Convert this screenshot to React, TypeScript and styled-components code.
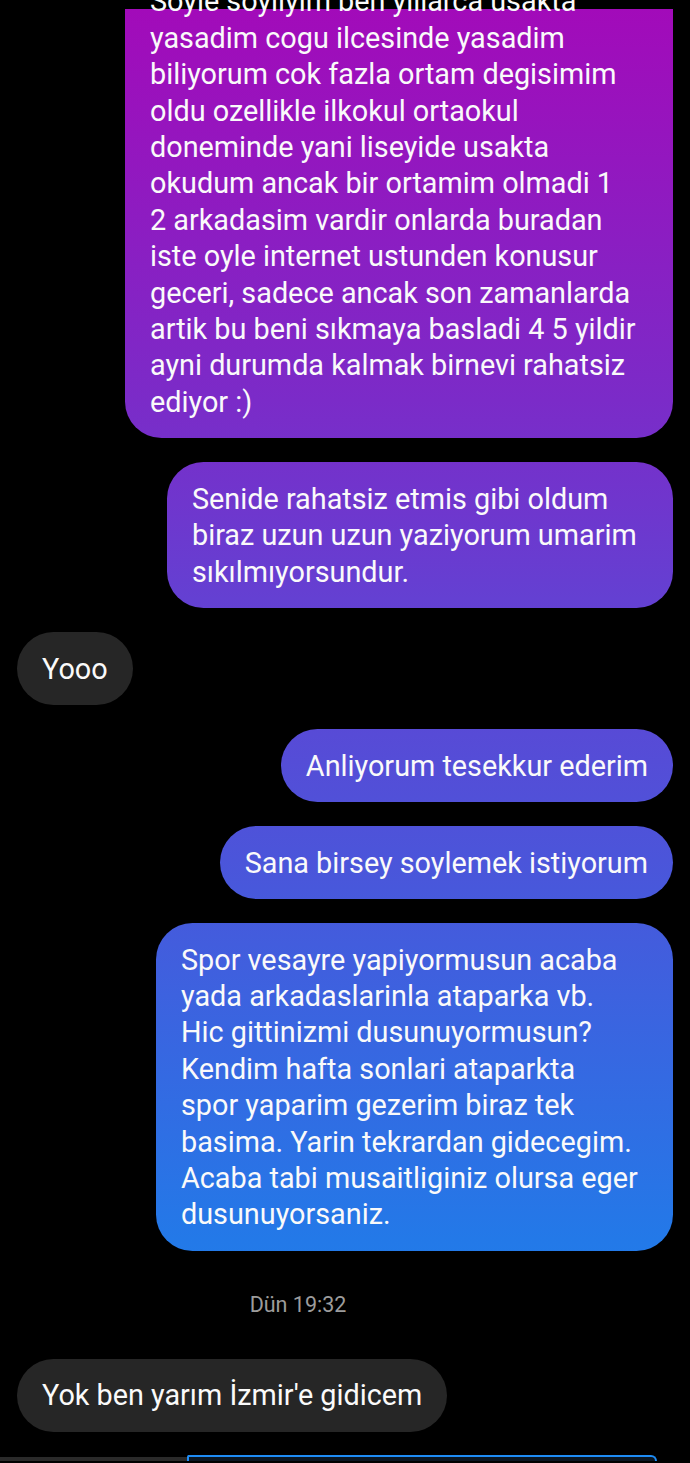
import styled, { createGlobalStyle, css } from 'styled-components';

const GlobalStyle = createGlobalStyle`
  html, body {
    margin: 0;
    padding: 0;
    background: #000;
    overflow: hidden;
  }
  body {
    font-family: Roboto, "Noto Sans", "Liberation Sans", sans-serif;
    -webkit-font-smoothing: antialiased;
  }
`;

// the instagram style gradient runs over the whole screen, bubbles show the part behind them
const sentGradient = `linear-gradient(180deg, #a30ab9 0px, #7b2bc8 400px, #6440d2 600px, #4b55da 860px, #2379e8 1240px, #1b86ee 1463px) fixed`;

const Screen = styled.div`
  width: 690px;
  height: 1463px;
  overflow: hidden;
  background: #000;
`;

const Thread = styled.div`
  display: flex;
  flex-direction: column;
  gap: 24px;
  padding: 0 17px;
  margin-top: -35px;
`;

const Row = styled.div<{ $side: 'in' | 'out' }>`
  display: flex;
  justify-content: ${(p) => (p.$side === 'out' ? 'flex-end' : 'flex-start')};
`;

const Bubble = styled.div<{ $side: 'in' | 'out'; $width?: number; $clipTop?: number }>`
  box-sizing: border-box;
  padding: 18.3px 25px;
  border-radius: 36.5px;
  font-size: 28.8px;
  line-height: 36.4px;
  color: #fafafa;
  white-space: nowrap;
  ${(p) => (p.$width ? `width: ${p.$width}px;` : '')}
  ${(p) =>
    p.$side === 'out'
      ? css`
          background: ${sentGradient};
        `
      : css`
          background: #262626;
        `}
  ${(p) =>
    p.$clipTop
      ? css`
          border-radius: 0 0 36.5px 36.5px;
          background: linear-gradient(#000, #000) 0 0 / 100% ${p.$clipTop}px no-repeat, ${sentGradient};
        `
      : ''}
`;

const Stamp = styled.div`
  margin: 18px 0;
  padding-right: 94px;
  text-align: center;
  font-size: 21.5px;
  line-height: 24px;
  color: #9c9c9c;
`;

const Peek = styled.div`
  display: flex;
  align-items: flex-end;
  margin: -1px -17px 0;
  height: 6px;
`;

const PeekBar = styled.div`
  width: 187px;
  height: 4px;
  background: #2a2a2a;
`;

const PeekBubble = styled.div`
  width: 470px;
  height: 6px;
  box-sizing: border-box;
  border: 2px solid #1e8cf5;
  border-bottom: none;
  border-radius: 10px 34px 0 0;
  background: #0a1622;
`;

const Lines = ({ lines }: { lines: string[] }) => (
  <>
    {lines.map((l, i) => (
      <div key={i}>{l}</div>
    ))}
  </>
);

export default function App() {
  return (
    <Screen>
      <GlobalStyle />
      <Thread>
        <Row $side="out">
          <Bubble $side="out" $width={548} $clipTop={44}>
            <Lines
              lines={[
                'Soyle soyliyim ben yillarca usakta',
                'yasadim cogu ilcesinde yasadim',
                'biliyorum cok fazla ortam degisimim',
                'oldu ozellikle ilkokul ortaokul',
                'doneminde yani liseyide usakta',
                'okudum ancak bir ortamim olmadi 1',
                '2 arkadasim vardir onlarda buradan',
                'iste oyle internet ustunden konusur',
                'geceri, sadece ancak son zamanlarda',
                'artik bu beni sıkmaya basladi 4 5 yildir',
                'ayni durumda kalmak birnevi rahatsiz',
                'ediyor :)',
              ]}
            />
          </Bubble>
        </Row>
        <Row $side="out">
          <Bubble $side="out" $width={506}>
            <Lines
              lines={['Senide rahatsiz etmis gibi oldum', 'biraz uzun uzun yaziyorum umarim', 'sıkılmıyorsundur.']}
            />
          </Bubble>
        </Row>
        <Row $side="in">
          <Bubble $side="in">Yooo</Bubble>
        </Row>
        <Row $side="out">
          <Bubble $side="out">Anliyorum tesekkur ederim</Bubble>
        </Row>
        <Row $side="out">
          <Bubble $side="out">Sana birsey soylemek istiyorum</Bubble>
        </Row>
        <Row $side="out">
          <Bubble $side="out" $width={517}>
            <Lines
              lines={[
                'Spor vesayre yapiyormusun acaba',
                'yada arkadaslarinla ataparka vb.',
                'Hic gittinizmi dusunuyormusun?',
                'Kendim hafta sonlari ataparkta',
                'spor yaparim gezerim biraz tek',
                'basima. Yarin tekrardan gidecegim.',
                'Acaba tabi musaitliginiz olursa eger',
                'dusunuyorsaniz.',
              ]}
            />
          </Bubble>
        </Row>
        <Stamp>Dün 19:32</Stamp>
        <Row $side="in">
          <Bubble $side="in">Yok ben yarım İzmir'e gidicem</Bubble>
        </Row>
        <Peek>
          <PeekBar />
          <PeekBubble />
        </Peek>
      </Thread>
    </Screen>
  );
}
